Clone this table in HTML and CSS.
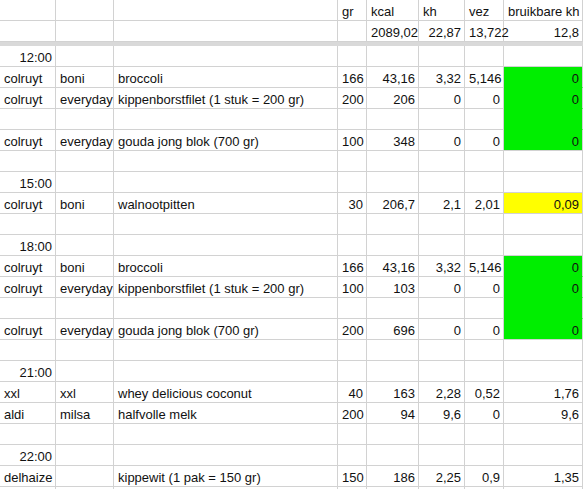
FILE: index.html
```html
<!DOCTYPE html>
<html>
<head>
<meta charset="utf-8">
<link rel="stylesheet" href="styles.css">
</head>
<body>
<div class="sheet">
  <div class="c"></div><div class="c"></div><div class="c"></div><div class="c">gr</div><div class="c">kcal</div><div class="c">kh</div><div class="c">vez</div><div class="c">bruikbare kh</div>
  <div class="c"></div><div class="c"></div><div class="c"></div><div class="c"></div><div class="c n">2089,02</div><div class="c n">22,87</div><div class="c n">13,722</div><div class="c n">12,8</div>
  <div class="band"></div>

  <div class="c n">12:00</div><div class="c"></div><div class="c"></div><div class="c"></div><div class="c"></div><div class="c"></div><div class="c"></div><div class="c"></div>
  <div class="c">colruyt</div><div class="c">boni</div><div class="c">broccoli</div><div class="c n">166</div><div class="c n">43,16</div><div class="c n">3,32</div><div class="c n">5,146</div><div class="c n green">0</div>
  <div class="c">colruyt</div><div class="c">everyday</div><div class="c">kippenborstfilet (1 stuk = 200 gr)</div><div class="c n">200</div><div class="c n">206</div><div class="c n">0</div><div class="c n">0</div><div class="c n green">0</div>
  <div class="c"></div><div class="c"></div><div class="c"></div><div class="c"></div><div class="c"></div><div class="c"></div><div class="c"></div><div class="c green"></div>
  <div class="c">colruyt</div><div class="c">everyday</div><div class="c">gouda jong blok (700 gr)</div><div class="c n">100</div><div class="c n">348</div><div class="c n">0</div><div class="c n">0</div><div class="c n green last">0</div>
  <div class="c"></div><div class="c"></div><div class="c"></div><div class="c"></div><div class="c"></div><div class="c"></div><div class="c"></div><div class="c"></div>

  <div class="c n">15:00</div><div class="c"></div><div class="c"></div><div class="c"></div><div class="c"></div><div class="c"></div><div class="c"></div><div class="c"></div>
  <div class="c">colruyt</div><div class="c">boni</div><div class="c">walnootpitten</div><div class="c n">30</div><div class="c n">206,7</div><div class="c n">2,1</div><div class="c n">2,01</div><div class="c n yellow">0,09</div>
  <div class="c"></div><div class="c"></div><div class="c"></div><div class="c"></div><div class="c"></div><div class="c"></div><div class="c"></div><div class="c"></div>

  <div class="c n">18:00</div><div class="c"></div><div class="c"></div><div class="c"></div><div class="c"></div><div class="c"></div><div class="c"></div><div class="c"></div>
  <div class="c">colruyt</div><div class="c">boni</div><div class="c">broccoli</div><div class="c n">166</div><div class="c n">43,16</div><div class="c n">3,32</div><div class="c n">5,146</div><div class="c n green">0</div>
  <div class="c">colruyt</div><div class="c">everyday</div><div class="c">kippenborstfilet (1 stuk = 200 gr)</div><div class="c n">100</div><div class="c n">103</div><div class="c n">0</div><div class="c n">0</div><div class="c n green">0</div>
  <div class="c"></div><div class="c"></div><div class="c"></div><div class="c"></div><div class="c"></div><div class="c"></div><div class="c"></div><div class="c green"></div>
  <div class="c">colruyt</div><div class="c">everyday</div><div class="c">gouda jong blok (700 gr)</div><div class="c n">200</div><div class="c n">696</div><div class="c n">0</div><div class="c n">0</div><div class="c n green last">0</div>
  <div class="c"></div><div class="c"></div><div class="c"></div><div class="c"></div><div class="c"></div><div class="c"></div><div class="c"></div><div class="c"></div>

  <div class="c n">21:00</div><div class="c"></div><div class="c"></div><div class="c"></div><div class="c"></div><div class="c"></div><div class="c"></div><div class="c"></div>
  <div class="c">xxl</div><div class="c">xxl</div><div class="c">whey delicious coconut</div><div class="c n">40</div><div class="c n">163</div><div class="c n">2,28</div><div class="c n">0,52</div><div class="c n">1,76</div>
  <div class="c">aldi</div><div class="c">milsa</div><div class="c">halfvolle melk</div><div class="c n">200</div><div class="c n">94</div><div class="c n">9,6</div><div class="c n">0</div><div class="c n">9,6</div>
  <div class="c"></div><div class="c"></div><div class="c"></div><div class="c"></div><div class="c"></div><div class="c"></div><div class="c"></div><div class="c"></div>

  <div class="c n">22:00</div><div class="c"></div><div class="c"></div><div class="c"></div><div class="c"></div><div class="c"></div><div class="c"></div><div class="c"></div>
  <div class="c">delhaize</div><div class="c"></div><div class="c">kippewit (1 pak = 150 gr)</div><div class="c n">150</div><div class="c n">186</div><div class="c n">2,25</div><div class="c n">0,9</div><div class="c n">1,35</div>
  <div class="c"></div><div class="c"></div><div class="c"></div><div class="c"></div><div class="c"></div><div class="c"></div><div class="c"></div><div class="c"></div>
</div>
</body>
</html>
```
FILE: styles.css
```css
html, body {
  margin: 0;
  padding: 0;
  background: #fff;
}
body {
  font-family: "Liberation Sans", Arial, sans-serif;
  font-size: 13px;
  color: #111;
  overflow: hidden;
}
.sheet {
  display: grid;
  grid-template-columns: 56px 58px 224px 29px 52px 46px 39px 79px;
  width: 583px;
}
.c {
  box-sizing: border-box;
  height: 21px;
  border-right: 1px solid #d2d2d2;
  border-bottom: 1px solid #d2d2d2;
  padding: 4px 3px 0 4px;
  line-height: 16px;
  white-space: nowrap;
  overflow: visible;
}
.n {
  text-align: right;
  padding-right: 3px;
}
.band {
  grid-column: 1 / -1;
  height: 4px;
  background: #d9d9d9;
}
.green {
  background: #00ee00;
  border-bottom-color: #00ee00;
}
.green.last {
  border-bottom-color: #d2d2d2;
}
.yellow {
  background: #ffff00;
}
```
